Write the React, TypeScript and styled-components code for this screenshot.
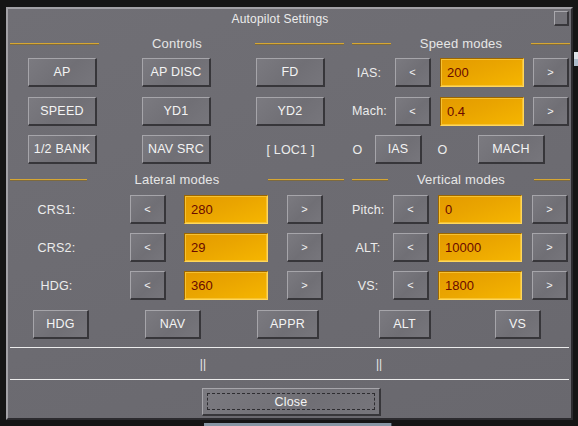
import React from "react";
import styled, { createGlobalStyle } from "styled-components";

const Global = createGlobalStyle`
  html, body {
    margin: 0;
    padding: 0;
    background: #151515;
  }
  body {
    width: 578px;
    height: 426px;
    overflow: hidden;
    font-family: "Liberation Sans", Arial, sans-serif;
  }
`;

const Desktop = styled.div`
  position: relative;
  width: 578px;
  height: 426px;
  box-sizing: border-box;
  padding: 7px 5px 6px 6px;
`;

// bits of the app behind the dialog
const BehindBar = styled.div`
  position: absolute;
  left: 204px;
  top: 423px;
  width: 187px;
  height: 3px;
  background: #8796a4;
  border-right: 1px solid #3c4650;
`;

const BehindEdge = styled.div`
  position: absolute;
  left: 574px;
  top: 52px;
  width: 4px;
  height: 14px;
  background: linear-gradient(#dfe3e8 50%, #aebccb 50%);
`;

const Dialog = styled.div`
  position: relative;
  width: 567px;
  height: 413px;
  box-sizing: border-box;
  border: 2px solid;
  border-color: #a2a1a6 #2c2b2f #2c2b2f #a2a1a6;
  background: linear-gradient(160deg, #706f75 0%, #69686e 100%);
  display: flex;
  flex-direction: column;
  padding: 0 1px 2px 2px;
  color: #ececec;
`;

const TitleBar = styled.div`
  height: 20px;
  display: flex;
  align-items: flex-start;
`;

const Title = styled.div`
  flex: 1;
  text-align: center;
  font-size: 12px;
  line-height: 20px;
  padding-right: 4px;
  letter-spacing: 0.2px;
`;

const CloseBox = styled.div`
  width: 15px;
  height: 15px;
  margin-top: 2px;
  margin-right: 1px;
  box-sizing: border-box;
  border: 1px solid;
  border-width: 1px 2px 2px 1px;
  border-color: #a9a8ad #38373b #38373b #a9a8ad;
  background: #737278;
`;

const Sections = styled.div`
  display: grid;
  grid-template-columns: 334px 218px;
  column-gap: 8px;
  row-gap: 8px;
  padding-top: 7px;
`;

const Section = styled.div`
  display: flex;
  flex-direction: column;
`;

const Header = styled.div<{ $gap: number; $after: number }>`
  display: flex;
  align-items: center;
  gap: ${(p) => p.$gap}px;
  height: 14px;
  margin-bottom: ${(p) => p.$after}px;
  font-size: 13px;
  letter-spacing: 0.2px;
  color: #e6e6e6;
  white-space: nowrap;
`;

const Rule = styled.div`
  flex: 1;
  height: 1px;
  background: #d6a733;
  box-shadow: 0 1px 0 #7e6a3e;
`;

const Rows = styled.div<{ $gap: number }>`
  display: flex;
  flex-direction: column;
  gap: ${(p) => p.$gap}px;
`;

const Row = styled.div<{ $pad?: number }>`
  display: flex;
  align-items: center;
  height: 29px;
  padding-left: ${(p) => p.$pad ?? 0}px;
`;

const Button = styled.div<{ $w: number; $mr?: number }>`
  width: ${(p) => p.$w}px;
  height: 29px;
  margin-right: ${(p) => p.$mr ?? 0}px;
  flex: none;
  box-sizing: border-box;
  border: 1px solid;
  border-width: 1px 2px 2px 1px;
  border-color: #a6a5aa #37363a #37363a #a6a5aa;
  background: linear-gradient(135deg, #7b7a80 0%, #706f75 55%, #77767c 100%);
  display: flex;
  align-items: center;
  justify-content: center;
  font-size: 12.5px;
  letter-spacing: 0.2px;
  color: #f4f4f4;
  white-space: nowrap;
`;

const Arrow = styled(Button)`
  font-size: 11px;
`;

const Field = styled.div<{ $mr: number }>`
  width: 84px;
  height: 29px;
  margin-right: ${(p) => p.$mr}px;
  flex: none;
  box-sizing: border-box;
  border: 1px solid;
  border-color: #9c6600 #ffd75a #ffd75a #9c6600;
  box-shadow: inset 0 0 0 1px #f6c233;
  background: linear-gradient(160deg, #e39a00 0%, #eaa500 45%, #f6b600 100%);
  display: flex;
  align-items: center;
  padding-left: 6px;
  font-size: 13px;
  color: #6a0a00;
`;

const Label = styled.div<{ $w: number; $mr: number }>`
  width: ${(p) => p.$w}px;
  margin-right: ${(p) => p.$mr}px;
  flex: none;
  text-align: center;
  font-size: 12.5px;
  letter-spacing: 0.2px;
  color: #ececec;
`;

const Plain = styled.div<{ $w: number; $mr?: number }>`
  width: ${(p) => p.$w}px;
  margin-right: ${(p) => p.$mr ?? 0}px;
  flex: none;
  text-align: center;
  font-size: 12.5px;
  letter-spacing: 0.2px;
  color: #ececec;
`;

const Divider = styled.div<{ $top?: number }>`
  height: 1px;
  margin-top: ${(p) => p.$top ?? 0}px;
  margin-right: 1px;
  background: #ececec;
`;

const Status = styled.div`
  height: 31px;
  display: flex;
  align-items: center;
  justify-content: center;
  gap: 170px;
  padding-left: 2px;
  font-size: 12px;
  color: #e8e8e8;
`;

const Footer = styled.div`
  display: flex;
  justify-content: center;
  padding-top: 8px;
`;

const CloseButton = styled.div`
  width: 179px;
  height: 28px;
  box-sizing: border-box;
  border: 1px solid;
  border-width: 1px 2px 2px 1px;
  border-color: #a6a5aa #37363a #37363a #a6a5aa;
  background: linear-gradient(135deg, #7b7a80 0%, #706f75 60%, #77767c 100%);
  padding: 4px;
  margin-left: 3px;
`;

const Focus = styled.div`
  height: 100%;
  box-sizing: border-box;
  border: 1px dashed #2e2d31;
  display: flex;
  align-items: center;
  justify-content: center;
  font-size: 12.5px;
  letter-spacing: 0.2px;
  color: #f4f4f4;
`;

type ValueRowProps = {
  label: string;
  value: string;
  labelW: number;
  labelGap: number;
  gaps: [number, number];
};

const ValueRow = ({ label, value, labelW, labelGap, gaps }: ValueRowProps) => (
  <Row>
    <Label $w={labelW} $mr={labelGap}>{label}</Label>
    <Arrow $w={36} $mr={gaps[0]}>&lt;</Arrow>
    <Field $mr={gaps[1]}>{value}</Field>
    <Arrow $w={36}>&gt;</Arrow>
  </Row>
);

export default function App() {
  return (
    <>
      <Global />
      <Desktop>
        <BehindBar />
        <BehindEdge />
        <Dialog>
          <TitleBar>
            <Title>Autopilot Settings</Title>
            <CloseBox />
          </TitleBar>

          <Sections>
            <Section>
              <Header $gap={53} $after={8}>
                <Rule />
                Controls
                <Rule />
              </Header>
              <Rows $gap={9.5}>
                <Row $pad={18}>
                  <Button $w={69} $mr={45}>AP</Button>
                  <Button $w={69} $mr={45}>AP DISC</Button>
                  <Button $w={69}>FD</Button>
                </Row>
                <Row $pad={18}>
                  <Button $w={69} $mr={45}>SPEED</Button>
                  <Button $w={69} $mr={45}>YD1</Button>
                  <Button $w={69}>YD2</Button>
                </Row>
                <Row $pad={18}>
                  <Button $w={69} $mr={45}>1/2 BANK</Button>
                  <Button $w={69} $mr={45}>NAV SRC</Button>
                  <Plain $w={69}>[ LOC1 ]</Plain>
                </Row>
              </Rows>
            </Section>

            <Section>
              <Header $gap={29} $after={8}>
                <Rule />
                Speed modes
                <Rule />
              </Header>
              <Rows $gap={9.5}>
                <ValueRow label="IAS:" value="200" labelW={34} labelGap={9} gaps={[9, 9]} />
                <ValueRow label="Mach:" value="0.4" labelW={34} labelGap={9} gaps={[9, 9]} />
                <Row>
                  <Plain $w={11} $mr={12}>O</Plain>
                  <Button $w={47} $mr={15}>IAS</Button>
                  <Plain $w={11} $mr={30}>O</Plain>
                  <Button $w={67}>MACH</Button>
                </Row>
              </Rows>
            </Section>

            <Section>
              <Header $gap={48} $after={9}>
                <Rule />
                Lateral modes
                <Rule />
              </Header>
              <Rows $gap={9}>
                <ValueRow label="CRS1:" value="280" labelW={93} labelGap={27} gaps={[18, 19]} />
                <ValueRow label="CRS2:" value="29" labelW={93} labelGap={27} gaps={[18, 19]} />
                <ValueRow label="HDG:" value="360" labelW={93} labelGap={27} gaps={[18, 19]} />
                <Row $pad={23} style={{ marginTop: 1 }}>
                  <Button $w={56} $mr={56}>HDG</Button>
                  <Button $w={56} $mr={56}>NAV</Button>
                  <Button $w={62}>APPR</Button>
                </Row>
              </Rows>
            </Section>

            <Section>
              <Header $gap={29} $after={9}>
                <Rule />
                Vertical modes
                <Rule />
              </Header>
              <Rows $gap={9}>
                <ValueRow label="Pitch:" value="0" labelW={32} labelGap={9} gaps={[9, 10]} />
                <ValueRow label="ALT:" value="10000" labelW={32} labelGap={9} gaps={[9, 10]} />
                <ValueRow label="VS:" value="1800" labelW={32} labelGap={9} gaps={[9, 10]} />
                <Row $pad={27} style={{ marginTop: 1 }}>
                  <Button $w={52} $mr={64}>ALT</Button>
                  <Button $w={46}>VS</Button>
                </Row>
              </Rows>
            </Section>
          </Sections>

          <Divider $top={8} />
          <Status>
            <span>||</span>
            <span>||</span>
          </Status>
          <Divider />
          <Footer>
            <CloseButton>
              <Focus>Close</Focus>
            </CloseButton>
          </Footer>
        </Dialog>
      </Desktop>
    </>
  );
}
